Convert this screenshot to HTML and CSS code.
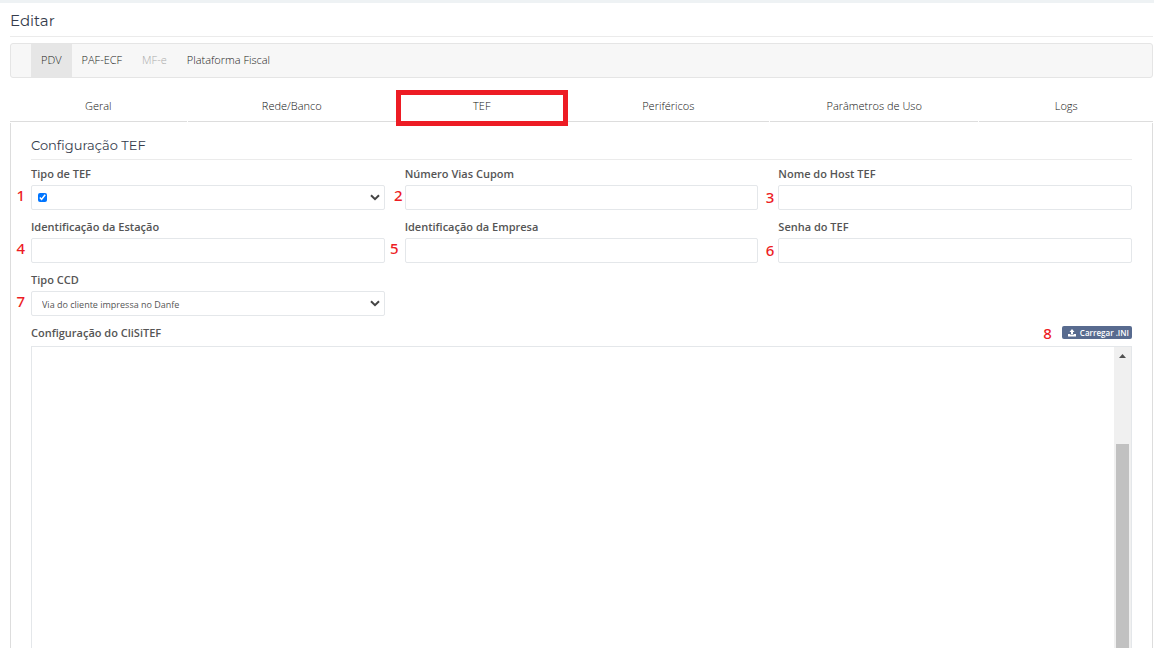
FILE: index.html
```html
<!DOCTYPE html>
<html lang="pt-BR">
<head>
<meta charset="utf-8">
<meta name="viewport" content="width=device-width, initial-scale=1">
<title>Editar</title>
<link rel="stylesheet" href="styles.css">
</head>
<body>
<main class="page">
  <h1 class="page-title">Editar</h1>
  <nav class="navbar">
    <a class="nav-link active" href="#pdv">PDV</a>
    <a class="nav-link" href="#paf">PAF-ECF</a>
    <a class="nav-link disabled" href="#mfe" aria-disabled="true">MF-e</a>
    <a class="nav-link" href="#fiscal">Plataforma Fiscal</a>
  </nav>
  <nav class="tabs">
    <a class="tab first" href="#geral">Geral</a>
    <a class="tab wide" href="#rede">Rede/Banco</a>
    <a class="tab marked" href="#tef">TEF</a>
    <a class="tab medium" href="#perifericos">Periféricos</a>
    <a class="tab wide" href="#parametros">Parâmetros de Uso</a>
    <a class="tab" href="#logs">Logs</a>
  </nav>
  <form class="panel">
    <h2 class="section-title">Configuração TEF</h2>
    <div class="grid">
      <div class="field">
        <label for="tipo">Tipo de TEF</label>
        <div class="control">
          <span class="pin far">1</span>
          <input class="check" type="checkbox" aria-label="Ativar tipo de TEF" checked>
          <select id="tipo" class="input"><option></option></select>
          <svg class="chevron" viewBox="0 0 10 7"><path d="M1 1.2 5 5.2 9 1.2"/></svg>
        </div>
      </div>
      <div class="field">
        <label for="vias">Número Vias Cupom</label>
        <div class="control"><span class="pin near">2</span><input id="vias" class="input" type="text"></div>
      </div>
      <div class="field">
        <label for="host">Nome do Host TEF</label>
        <div class="control"><span class="pin low">3</span><input id="host" class="input" type="text"></div>
      </div>
      <div class="field">
        <label for="estacao">Identificação da Estação</label>
        <div class="control"><span class="pin far">4</span><input id="estacao" class="input" type="text"></div>
      </div>
      <div class="field">
        <label for="empresa">Identificação da Empresa</label>
        <div class="control"><span class="pin far">5</span><input id="empresa" class="input" type="text"></div>
      </div>
      <div class="field">
        <label for="senha">Senha do TEF</label>
        <div class="control"><span class="pin low">6</span><input id="senha" class="input" type="text"></div>
      </div>
      <div class="field">
        <label for="ccd">Tipo CCD</label>
        <div class="control">
          <span class="pin far">7</span>
          <select id="ccd" class="input"><option>Via do cliente impressa no Danfe</option></select>
          <svg class="chevron" viewBox="0 0 10 7"><path d="M1 1.2 5 5.2 9 1.2"/></svg>
        </div>
      </div>
    </div>
    <div class="config-head">
      <label for="config">Configuração do CliSiTEF</label>
      <div class="upload">
        <span class="pin">8</span>
        <button class="upload-btn" type="button">
          <svg class="upload-icon" viewBox="0 0 16 16"><path d="M8 0 13 6H10V11H6V6H3ZM0 10H5V12H11V10H16V15H0Z"/></svg>
          Carregar .INI
        </button>
      </div>
    </div>
    <div class="config-box">
      <textarea id="config" class="config-text"></textarea>
      <div class="scrollbar" aria-hidden="true">
        <svg class="scroll-arrow" viewBox="0 0 7 4"><path d="M0 4 3.5 0 7 4Z"/></svg>
        <div class="scroll-thumb"></div>
      </div>
    </div>
  </form>
</main>
</body>
</html>
```
FILE: styles.css
```css
* { box-sizing: border-box; }
body {
  margin: 0;
  background: #fff;
  color: #555;
  font: 11px/16px "Open Sans", "Noto Sans", sans-serif;
}
.page {
  display: flex;
  flex-direction: column;
  height: 100vh;
  overflow: hidden;
  border-top: 3px solid #eef2f4;
  padding: 7px 1px 0 10px;
}
.page-title, .section-title {
  margin: 0;
  color: #353c4c;
  font-family: Montserrat, Inter, sans-serif;
  font-weight: 400;
  border-bottom: 1px solid #ebebeb;
}
.page-title {
  font-size: 15px;
  line-height: 22px;
  padding-bottom: 4px;
  margin-bottom: 6px;
}
.section-title {
  font-size: 13px;
  line-height: 20px;
  padding-bottom: 4px;
}
.navbar {
  display: flex;
  height: 35px;
  flex: none;
  padding-left: 20px;
  background: #f7f7f7;
  border: 1px solid #e5e5e5;
  border-radius: 3px;
}
.nav-link {
  padding: 0 10px;
  line-height: 32px;
  font-weight: 300;
  color: #222;
  text-decoration: none;
}
.nav-link.active { background: #e6e6e6; }
.nav-link.disabled { color: #aaa; }
.tabs {
  display: flex;
  flex: none;
  gap: 1px;
  padding-top: 13px;
}
.tab {
  position: relative;
  flex: 174 1 0;
  line-height: 30px;
  text-align: center;
  font-weight: 300;
  color: #111;
  text-decoration: none;
  border-bottom: 1px solid #ddd;
}
.tab.first { flex-grow: 177; }
.tab.wide { flex-grow: 209; }
.tab.medium { flex-grow: 202; }
.tab.marked { flex-grow: 170; }
.tab.marked::after {
  content: "";
  position: absolute;
  inset: -1px -1px -5px -1px;
  border: 5px solid #ed1c24;
}
.panel {
  display: flex;
  flex-direction: column;
  flex: 1;
  min-height: 0;
  margin-top: 1px;
  padding: 12px 20px 0;
  border: solid #ddd;
  border-width: 0 1px;
}
.grid {
  display: grid;
  grid-template-columns: repeat(3, 1fr);
  gap: 9px 20px;
  padding-top: 6px;
}
label {
  display: block;
  font-weight: 600;
  line-height: 16px;
}
.field { display: flex; flex-direction: column; gap: 3px; }
.control {
  position: relative;
  display: flex;
  align-items: center;
  height: 25px;
  border: 1px solid #e4e7ea;
  border-radius: 2px;
}
.input {
  flex: 1;
  min-width: 0;
  height: 23px;
  padding: 2px 10px 0;
  border: 0;
  outline: 0;
  background: transparent;
  color: #555;
  font: inherit;
  font-size: 9px;
  appearance: none;
}
.check { width: 9px; height: 9px; margin: 0 0 0 6px; }
.chevron {
  position: absolute;
  right: 4px;
  top: 8px;
  width: 10px;
  height: 7px;
  fill: none;
  stroke: #444;
  stroke-width: 2;
  pointer-events: none;
}
.pin {
  position: absolute;
  right: 100%;
  top: -2px;
  margin-right: 5px;
  color: #ed1c24;
  font-family: "Noto Sans", "Open Sans", sans-serif;
  font-size: 15px;
  font-weight: 500;
  line-height: 22px;
}
.pin.near { margin-right: 3px; }
.pin.far { margin-right: 7px; }
.pin.low { top: 0; }
.config-head {
  display: flex;
  justify-content: space-between;
  padding: 9px 0 5px;
}
.upload { position: relative; }
.upload .pin { margin-right: 10px; top: -3px; }
.upload-btn {
  display: flex;
  align-items: center;
  gap: 4px;
  height: 13px;
  margin-top: 1px;
  padding: 0 3px 0 6px;
  border: 0;
  border-radius: 2px;
  background: #586b8f;
  color: #fff;
  font: 600 8px/12px "Open Sans", sans-serif;
  white-space: nowrap;
}
.upload-icon { width: 8px; height: 8px; fill: #fff; }
.config-box {
  display: flex;
  flex: 1;
  min-height: 100px;
  border: 1px solid #e4e7ea;
  border-bottom: 0;
}
.config-text {
  flex: 1;
  padding: 6px 10px;
  border: 0;
  outline: 0;
  resize: none;
  overflow: hidden;
  font: inherit;
}
.scrollbar {
  display: flex;
  flex-direction: column;
  align-items: center;
  width: 17px;
  padding-top: 7px;
  background: #f0f0f0;
}
.scroll-arrow { flex: none; width: 7px; height: 4px; fill: #505050; }
.scroll-thumb {
  flex: 1;
  width: 13px;
  margin-top: 86px;
  background: #c1c1c1;
}
```
